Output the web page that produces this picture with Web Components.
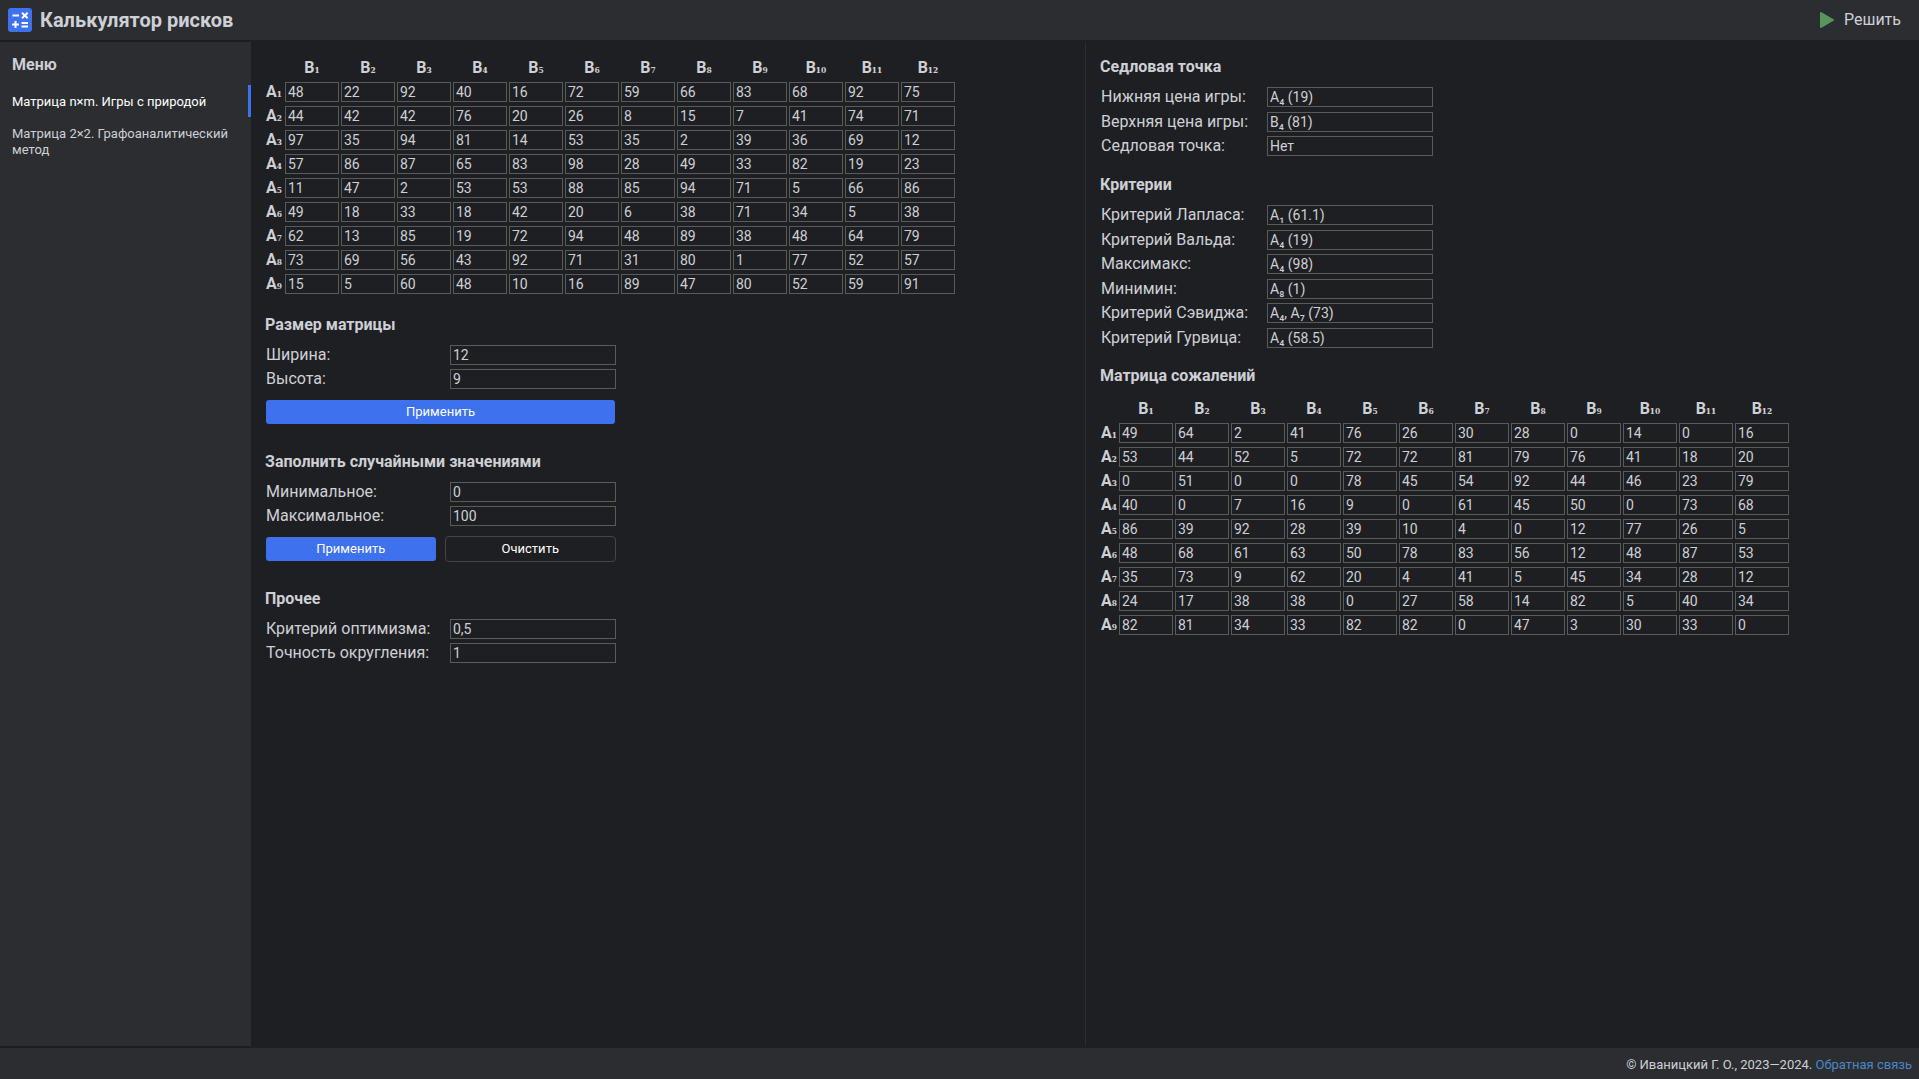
<!DOCTYPE html>
<html lang="ru">
<head>
<meta charset="utf-8">
<title>Калькулятор рисков</title>
<style>
  :root {
    --bg: #1e1f22;
    --panel: #2b2d30;
    --text: #ced0d6;
    --bright: #ffffff;
    --accent: #3d71ed;
    --line: #5a5a5a;
    --button-line: #43454a;
    --link: #4a88c7;
    --run: #57965c;
  }
  html, body { height: 100%; }
  body {
    margin: 0;
    background: var(--bg);
    color: var(--text);
    font: 16px/20px Roboto, "Noto Sans", sans-serif;
  }
</style>
</head>
<body>
<risk-app>
  <app-header slot="header">Калькулятор рисков</app-header>
  <side-menu slot="menu" heading="Меню">
    <menu-item current>Матрица n×m. Игры с природой</menu-item>
    <menu-item>Матрица 2×2. Графоаналитический метод</menu-item>
  </side-menu>

  <app-pane slot="input">
    <value-matrix label="Платёжная матрица" rows="
      48 22 92 40 16 72 59 66 83 68 92 75;
      44 42 42 76 20 26 8 15 7 41 74 71;
      97 35 94 81 14 53 35 2 39 36 69 12;
      57 86 87 65 83 98 28 49 33 82 19 23;
      11 47 2 53 53 88 85 94 71 5 66 86;
      49 18 33 18 42 20 6 38 71 34 5 38;
      62 13 85 19 72 94 48 89 38 48 64 79;
      73 69 56 43 92 71 31 80 1 77 52 57;
      15 5 60 48 10 16 89 47 80 52 59 91"></value-matrix>
    <form-section heading="Размер матрицы">
      <form-field label="Ширина:" value="12"></form-field>
      <form-field label="Высота:" value="9"></form-field>
      <app-button slot="actions">Применить</app-button>
    </form-section>
    <form-section heading="Заполнить случайными значениями">
      <form-field label="Минимальное:" value="0"></form-field>
      <form-field label="Максимальное:" value="100"></form-field>
      <app-button slot="actions">Применить</app-button>
      <app-button slot="actions" outlined>Очистить</app-button>
    </form-section>
    <form-section heading="Прочее">
      <form-field label="Критерий оптимизма:" value="0,5"></form-field>
      <form-field label="Точность округления:" value="1"></form-field>
    </form-section>
  </app-pane>

  <app-pane slot="result" divided>
    <form-section heading="Седловая точка" results>
      <form-field label="Нижняя цена игры:" value="A₄ (19)" readonly></form-field>
      <form-field label="Верхняя цена игры:" value="B₄ (81)" readonly></form-field>
      <form-field label="Седловая точка:" value="Нет" readonly></form-field>
    </form-section>
    <form-section heading="Критерии" results>
      <form-field label="Критерий Лапласа:" value="A₁ (61.1)" readonly></form-field>
      <form-field label="Критерий Вальда:" value="A₄ (19)" readonly></form-field>
      <form-field label="Максимакс:" value="A₄ (98)" readonly></form-field>
      <form-field label="Минимин:" value="A₈ (1)" readonly></form-field>
      <form-field label="Критерий Сэвиджа:" value="A₄, A₇ (73)" readonly></form-field>
      <form-field label="Критерий Гурвица:" value="A₄ (58.5)" readonly></form-field>
    </form-section>
    <form-section heading="Матрица сожалений" results>
      <value-matrix label="Матрица сожалений" readonly rows="
        49 64 2 41 76 26 30 28 0 14 0 16;
        53 44 52 5 72 72 81 79 76 41 18 20;
        0 51 0 0 78 45 54 92 44 46 23 79;
        40 0 7 16 9 0 61 45 50 0 73 68;
        86 39 92 28 39 10 4 0 12 77 26 5;
        48 68 61 63 50 78 83 56 12 48 87 53;
        35 73 9 62 20 4 41 5 45 34 28 12;
        24 17 38 38 0 27 58 14 82 5 40 34;
        82 81 34 33 82 82 0 47 3 30 33 0"></value-matrix>
    </form-section>
  </app-pane>

  <app-footer slot="footer">© Иваницкий Г. О., 2023—2024.</app-footer>
</risk-app>

<script>
const inputStyle = `
  input {
    box-sizing: border-box;
    height: 20px;
    margin: 0;
    padding: 0 2px;
    border: 1px solid var(--line);
    border-radius: 0;
    background: transparent;
    color: var(--text);
    font: 14px/18px Roboto, "Noto Sans", sans-serif;
    outline: none;
  }
  input:focus { border-color: var(--accent); }
`;

class BaseElement extends HTMLElement {
  connectedCallback() {
    if (this.shadowRoot) return;
    this.attachShadow({ mode: 'open' }).innerHTML = this.render();
  }
}

customElements.define('risk-app', class extends BaseElement {
  render() {
    return `<style>
      :host { display: flex; flex-direction: column; gap: 2px; min-height: 100%; }
      .body { flex: 1; display: flex; }
      aside { flex: 0 0 251px; display: flex; background: var(--panel); }
      main { flex: 1; display: grid; grid-template-columns: 1fr 1fr; min-width: 0; }
    </style>
    <slot name="header"></slot>
    <div class="body">
      <aside><slot name="menu"></slot></aside>
      <main><slot name="input"></slot><slot name="result"></slot></main>
    </div>
    <slot name="footer"></slot>`;
  }
});

customElements.define('app-header', class extends BaseElement {
  render() {
    return `<style>
      :host { display: block; background: var(--panel); }
      header { display: flex; align-items: center; gap: 8px; height: 40px; padding: 0 8px; }
      h1 { flex: 1; margin: 0; font-size: 20px; line-height: 24px; font-weight: 700; }
      svg { display: block; }
      button {
        display: flex; align-items: center; gap: 9px;
        padding: 0 10px; border: 0; background: none;
        color: inherit; font: inherit; cursor: pointer;
      }
    </style>
    <header>
      <svg width="24" height="24" viewBox="0 0 24 24" aria-hidden="true">
        <rect width="24" height="24" rx="3" fill="var(--accent)"/>
        <g stroke="#fff" stroke-width="2" fill="none">
          <path d="M4.500 7.500h6.500M4 16.500h7M7.500 13v7M13.500 15h6.500M13.500 18.500h6.500"/>
          <path d="M14 4.700l5.600 5.600M19.600 4.700l-5.600 5.600"/>
        </g>
      </svg>
      <h1><slot></slot></h1>
      <button type="button">
        <svg width="16" height="18" viewBox="0 0 16 18" aria-hidden="true">
          <path d="M2 2v14l12-7z" fill="var(--run)" stroke="var(--run)" stroke-width="2" stroke-linejoin="round"/>
        </svg>
        <span>Решить</span>
      </button>
    </header>`;
  }
});

customElements.define('side-menu', class extends BaseElement {
  render() {
    return `<style>
      :host { display: block; flex: 1; }
      h2 { margin: 0; padding: 13px 12px 10px; font-size: 16px; line-height: 20px; }
    </style>
    <nav>
      <h2>${this.getAttribute('heading')}</h2>
      <slot></slot>
    </nav>`;
  }
});

customElements.define('menu-item', class extends BaseElement {
  render() {
    return `<style>
      :host { display: block; }
      a {
        display: block;
        padding: 9px 12px 7px;
        font-size: 13px; line-height: 16px;
        color: inherit; text-decoration: none;
      }
      :host([current]) a {
        padding-right: 9px;
        border-right: 3px solid var(--accent);
        color: var(--bright);
      }
    </style>
    <a href="#"><slot></slot></a>`;
  }
});

customElements.define('app-pane', class extends BaseElement {
  render() {
    return `<style>
      :host { display: block; box-sizing: border-box; min-width: 0; padding: 14px; }
      :host([divided]) { border-left: 1px solid var(--panel); }
    </style>
    <slot></slot>`;
  }
});

customElements.define('form-section', class extends BaseElement {
  render() {
    return `<style>
      :host { display: block; margin-top: 18px; --label-width: 184px; }
      :host([results]) { margin-top: 15px; --label-width: 166px; }
      :host(:first-child) { margin-top: 0; }
      h2 { margin: 0; padding-bottom: 7px; font-size: 16px; line-height: 22px; font-weight: 700; }
      .actions { display: flex; gap: 8px; width: 351px; padding: 8px 0; }
      .actions[hidden] { display: none; }
    </style>
    <section>
      <h2>${this.getAttribute('heading')}</h2>
      <slot></slot>
      <div class="actions"${this.querySelector('[slot="actions"]') ? '' : ' hidden'}><slot name="actions"></slot></div>
    </section>`;
  }
});

customElements.define('form-field', class extends BaseElement {
  render() {
    const readonly = this.hasAttribute('readonly') ? ' readonly' : '';
    return `<style>
      :host { display: flex; box-sizing: border-box; height: 24px; padding: 2px 0 0 1px; }
      :host([readonly]:nth-child(odd)) { height: 25px; }
      label { flex: 0 0 var(--label-width); line-height: 20px; }
      input { width: 166px; }
      ${inputStyle}
    </style>
    <label for="field">${this.getAttribute('label')}</label>
    <input id="field" type="text" value="${this.getAttribute('value')}"${readonly}>`;
  }
});

customElements.define('app-button', class extends BaseElement {
  render() {
    return `<style>
      :host { display: flex; flex: 1; min-width: 0; }
      button {
        flex: 1; height: 26px; padding: 0;
        border: 1px solid transparent; border-radius: 4px;
        background: var(--accent) padding-box;
        color: var(--bright);
        font: 13px/16px Roboto, "Noto Sans", sans-serif;
        cursor: pointer;
      }
      :host([outlined]) button { background: none; border-color: var(--button-line); }
    </style>
    <button type="button"><slot></slot></button>`;
  }
});

customElements.define('value-matrix', class extends BaseElement {
  render() {
    const rows = this.getAttribute('rows').trim().split(';').map(row => row.trim().split(/\s+/));
    const readonly = this.hasAttribute('readonly') ? ' readonly' : '';
    const sub = n => String(n).replace(/\d/g, d => String.fromCharCode(0x2080 + Number(d)));
    const head = rows[0].map((_, c) => `<th scope="col">B<span>${sub(c + 1)}</span></th>`).join('');
    const body = rows.map((row, r) => `<tr><th scope="row">A<span>${sub(r + 1)}</span></th>${row.map((v, c) =>
      `<td><input type="text" value="${v}" aria-label="A${sub(r + 1)} B${sub(c + 1)}"${readonly}></td>`).join('')}</tr>`).join('');
    return `<style>
      :host { display: block; --head-width: 19px; }
      :host([readonly]) { padding-top: 3px; --head-width: 18px; }
      table { border-collapse: collapse; table-layout: fixed; width: max-content; }
      th, td { height: 24px; padding: 0; text-align: center; vertical-align: middle; }
      th { font-size: 16px; line-height: 20px; font-weight: 700; }
      th span { font-family: "DejaVu Serif", serif; font-size: 12px; line-height: 1; }
      td { width: 56px; line-height: 0; }
      th:first-child { width: var(--head-width); padding-left: 1px; box-sizing: border-box; text-align: left; }
      input { width: 54px; }
      ${inputStyle}
    </style>
    <table aria-label="${this.getAttribute('label')}">
      <thead><tr><th></th>${head}</tr></thead>
      <tbody>${body}</tbody>
    </table>`;
  }
});

customElements.define('app-footer', class extends BaseElement {
  render() {
    return `<style>
      :host { display: block; background: var(--panel); }
      footer { padding: 9px 7px 6px; text-align: right; font-size: 13px; line-height: 16px; }
      a { color: var(--link); text-decoration: none; }
    </style>
    <footer><slot></slot> <a href="#">Обратная связь</a></footer>`;
  }
});
</script>
</body>
</html>
